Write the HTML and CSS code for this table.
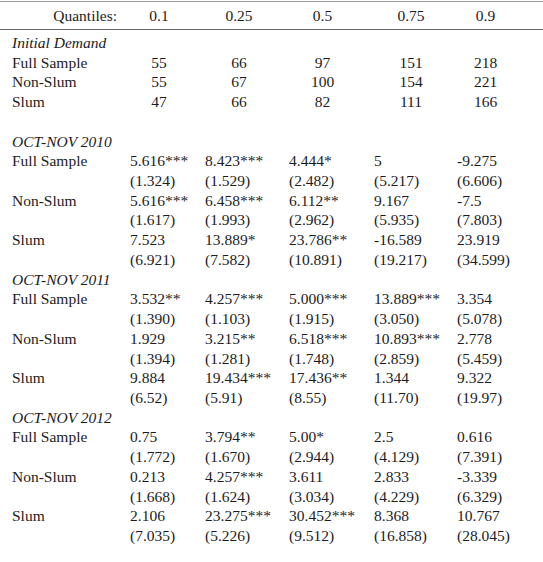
FILE: index.html
```html
<!DOCTYPE html>
<html>
<head>
<meta charset="utf-8">
<link rel="stylesheet" href="styles.css">
</head>
<body>
<table class="qt">
  <colgroup>
    <col class="c0"><col class="c1"><col class="c2"><col class="c3"><col class="c4"><col class="c5">
  </colgroup>
  <thead>
    <tr class="head">
      <th class="lab-h">Quantiles:</th>
      <th class="k1">0.1</th><th class="k2">0.25</th><th class="k3">0.5</th><th class="k4">0.75</th><th class="k5">0.9</th>
    </tr>
  </thead>
  <tbody>
    <tr class="first"><td class="sec" colspan="6">Initial Demand</td></tr>
    <tr class="ctr"><td class="lab">Full Sample</td><td class="k1">55</td><td class="k2">66</td><td class="k3">97</td><td class="k4">151</td><td class="k5">218</td></tr>
    <tr class="ctr"><td class="lab">Non-Slum</td><td class="k1">55</td><td class="k2">67</td><td class="k3">100</td><td class="k4">154</td><td class="k5">221</td></tr>
    <tr class="ctr"><td class="lab">Slum</td><td class="k1">47</td><td class="k2">66</td><td class="k3">82</td><td class="k4">111</td><td class="k5">166</td></tr>
    <tr><td colspan="6">&nbsp;</td></tr>

    <tr><td class="sec" colspan="6">OCT-NOV 2010</td></tr>
    <tr><td class="lab">Full Sample</td><td>5.616***</td><td>8.423***</td><td>4.444*</td><td>5</td><td>-9.275</td></tr>
    <tr><td></td><td>(1.324)</td><td>(1.529)</td><td>(2.482)</td><td>(5.217)</td><td>(6.606)</td></tr>
    <tr><td class="lab">Non-Slum</td><td>5.616***</td><td>6.458***</td><td>6.112**</td><td>9.167</td><td>-7.5</td></tr>
    <tr><td></td><td>(1.617)</td><td>(1.993)</td><td>(2.962)</td><td>(5.935)</td><td>(7.803)</td></tr>
    <tr><td class="lab">Slum</td><td>7.523</td><td>13.889*</td><td>23.786**</td><td>-16.589</td><td>23.919</td></tr>
    <tr><td></td><td>(6.921)</td><td>(7.582)</td><td>(10.891)</td><td>(19.217)</td><td>(34.599)</td></tr>

    <tr><td class="sec" colspan="6">OCT-NOV 2011</td></tr>
    <tr><td class="lab">Full Sample</td><td>3.532**</td><td>4.257***</td><td>5.000***</td><td>13.889***</td><td>3.354</td></tr>
    <tr><td></td><td>(1.390)</td><td>(1.103)</td><td>(1.915)</td><td>(3.050)</td><td>(5.078)</td></tr>
    <tr><td class="lab">Non-Slum</td><td>1.929</td><td>3.215**</td><td>6.518***</td><td>10.893***</td><td>2.778</td></tr>
    <tr><td></td><td>(1.394)</td><td>(1.281)</td><td>(1.748)</td><td>(2.859)</td><td>(5.459)</td></tr>
    <tr><td class="lab">Slum</td><td>9.884</td><td>19.434***</td><td>17.436**</td><td>1.344</td><td>9.322</td></tr>
    <tr><td></td><td>(6.52)</td><td>(5.91)</td><td>(8.55)</td><td>(11.70)</td><td>(19.97)</td></tr>

    <tr><td class="sec" colspan="6">OCT-NOV 2012</td></tr>
    <tr><td class="lab">Full Sample</td><td>0.75</td><td>3.794**</td><td>5.00*</td><td>2.5</td><td>0.616</td></tr>
    <tr><td></td><td>(1.772)</td><td>(1.670)</td><td>(2.944)</td><td>(4.129)</td><td>(7.391)</td></tr>
    <tr><td class="lab">Non-Slum</td><td>0.213</td><td>4.257***</td><td>3.611</td><td>2.833</td><td>-3.339</td></tr>
    <tr><td></td><td>(1.668)</td><td>(1.624)</td><td>(3.034)</td><td>(4.229)</td><td>(6.329)</td></tr>
    <tr><td class="lab">Slum</td><td>2.106</td><td>23.275***</td><td>30.452***</td><td>8.368</td><td>10.767</td></tr>
    <tr><td></td><td>(7.035)</td><td>(5.226)</td><td>(9.512)</td><td>(16.858)</td><td>(28.045)</td></tr>
  </tbody>
</table>
</body>
</html>
```
FILE: styles.css
```css
html, body {
  margin: 0;
  padding: 0;
  background: #ffffff;
}
body {
  font-family: "Liberation Serif", "Times New Roman", serif;
  font-size: 15.5px;
  color: #1c1c1c;
}
.qt {
  width: 543px;
  border-collapse: collapse;
  table-layout: fixed;
  margin-top: 1px;
}
.c0 { width: 130px; }
.c1 { width: 75px; }
.c2 { width: 84px; }
.c3 { width: 85px; }
.c4 { width: 83px; }
.c5 { width: 86px; }

.qt th, .qt td {
  padding: 0;
  text-align: left;
  font-weight: normal;
  white-space: nowrap;
  line-height: 19.72px;
  height: 19.72px;
  vertical-align: middle;
}
.qt .head th {
  height: 27px;
  border-top: 1px solid #9a9a9a;
  border-bottom: 1px solid #6a6a6a;
}
.qt .head .lab-h {
  text-align: right;
  padding-right: 13px;
}
.qt .lab, .qt .sec { padding-left: 12px; }
.qt .sec { font-style: italic; }
.qt .first td { padding-top: 3px; }

.head .k1, .ctr .k1 { text-align: center; padding-right: 17px; }
.head .k2, .ctr .k2 { text-align: center; padding-right: 16px; }
.head .k3, .ctr .k3 { text-align: center; padding-right: 18px; }
.head .k4, .ctr .k4 { text-align: center; padding-right: 9px; }
.head .k5, .ctr .k5 { text-align: center; padding-right: 29px; }
```
